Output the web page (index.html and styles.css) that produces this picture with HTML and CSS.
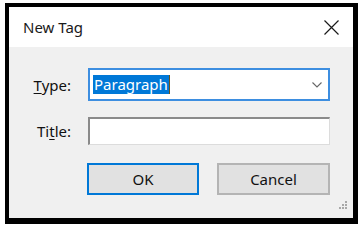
FILE: index.html
```html
<!DOCTYPE html>
<html>
<head>
<meta charset="utf-8">
<link rel="stylesheet" href="styles.css">
</head>
<body>
<div class="frame">
  <div class="window">
    <div class="titlebar">
      <span class="title">New Tag</span>
      <svg class="close" width="15" height="15" viewBox="0 0 15 15">
        <path d="M0.5 0.5 L14.5 14.5 M14.5 0.5 L0.5 14.5" stroke="#1a1a1a" stroke-width="1.2" fill="none"/>
      </svg>
    </div>
    <div class="body">
      <div class="form">
        <label class="lbl"><u>T</u>ype:</label>
        <div class="select">
          <span class="sel-text">Paragraph</span><span class="caret"></span>
          <svg class="chev" width="10" height="6" viewBox="0 0 10 6">
            <path d="M0.5 0.5 L5 5 L9.5 0.5" stroke="#666" stroke-width="1.1" fill="none"/>
          </svg>
        </div>
        <label class="lbl">Ti<u>t</u>le:</label>
        <div class="input"></div>
      </div>
      <div class="buttons">
        <button class="btn ok">OK</button>
        <button class="btn cancel">Cancel</button>
      </div>
      <svg class="grip" width="12" height="12" viewBox="0 0 12 12">
        <g fill="#a8a8a8">
          <rect x="9" y="0" width="2" height="2"/>
          <rect x="6" y="3" width="2" height="2"/>
          <rect x="9" y="3" width="2" height="2"/>
          <rect x="3" y="6" width="2" height="2"/>
          <rect x="6" y="6" width="2" height="2"/>
          <rect x="9" y="6" width="2" height="2"/>
        </g>
      </svg>
    </div>
  </div>
</div>
</body>
</html>
```
FILE: styles.css
```css
html, body {
  margin: 0;
  padding: 0;
  background: #ffffff;
}
body {
  width: 363px;
  height: 232px;
  overflow: hidden;
  font-family: "Noto Sans", "Open Sans", sans-serif;
  font-size: 15px;
  color: #000;
}
.frame {
  margin: 3px 0 0 5px;
  width: 344px;
  border-style: solid;
  border-color: #000;
  border-width: 4px 5px 6px 4px;
}
.window {
  display: flex;
  flex-direction: column;
  height: 211px;
}
.titlebar {
  height: 40px;
  background: #fff;
  display: flex;
  align-items: center;
  justify-content: space-between;
  padding: 0 14px 0 14px;
}
.title {
  font-size: 15px;
  color: #1a1a1a;
  margin-top: -1px;
}
.close {
  display: block;
}
.body {
  position: relative;
  flex: 1;
  background: #f0f0f0;
  padding-top: 21px;
}
.form {
  display: grid;
  grid-template-columns: 62px 242px;
  grid-template-rows: 33px 28px;
  column-gap: 17px;
  row-gap: 16px;
  align-items: center;
}
.lbl {
  text-align: right;
  font-size: 15px;
  color: #111;
}
.lbl u {
  text-underline-offset: 2px;
}
.select {
  height: 33px;
  box-sizing: border-box;
  border: 2px solid #3d8ee0;
  background: #fff;
  display: flex;
  align-items: center;
  padding-left: 3px;
  position: relative;
}
.sel-text {
  background: #0078d7;
  color: #fff;
  height: 19px;
  line-height: 19px;
  padding: 0 1px;
}
.caret {
  width: 1px;
  height: 19px;
  background: #6a5520;
}
.chev {
  margin-left: auto;
  margin-right: 6px;
  display: block;
}
.input {
  height: 28px;
  box-sizing: border-box;
  background: #fff;
  border-style: solid;
  border-width: 2px 1px 1px 2px;
  border-color: #8a8a8a #dcdcdc #dcdcdc #8a8a8a;
}
.buttons {
  display: flex;
  gap: 18px;
  padding-left: 78px;
  margin-top: 18px;
}
.btn {
  height: 32px;
  box-sizing: border-box;
  background: #e1e1e1;
  font-family: "Noto Sans", "Open Sans", sans-serif;
  font-size: 15px;
  color: #111;
  padding: 0;
  margin: 0;
}
.ok {
  width: 112px;
  border: 2px solid #0078d7;
}
.cancel {
  width: 113px;
  border: 2px solid #b4b4b4;
}
.grip {
  position: absolute;
  right: 5px;
  bottom: 5px;
  display: block;
}
```
